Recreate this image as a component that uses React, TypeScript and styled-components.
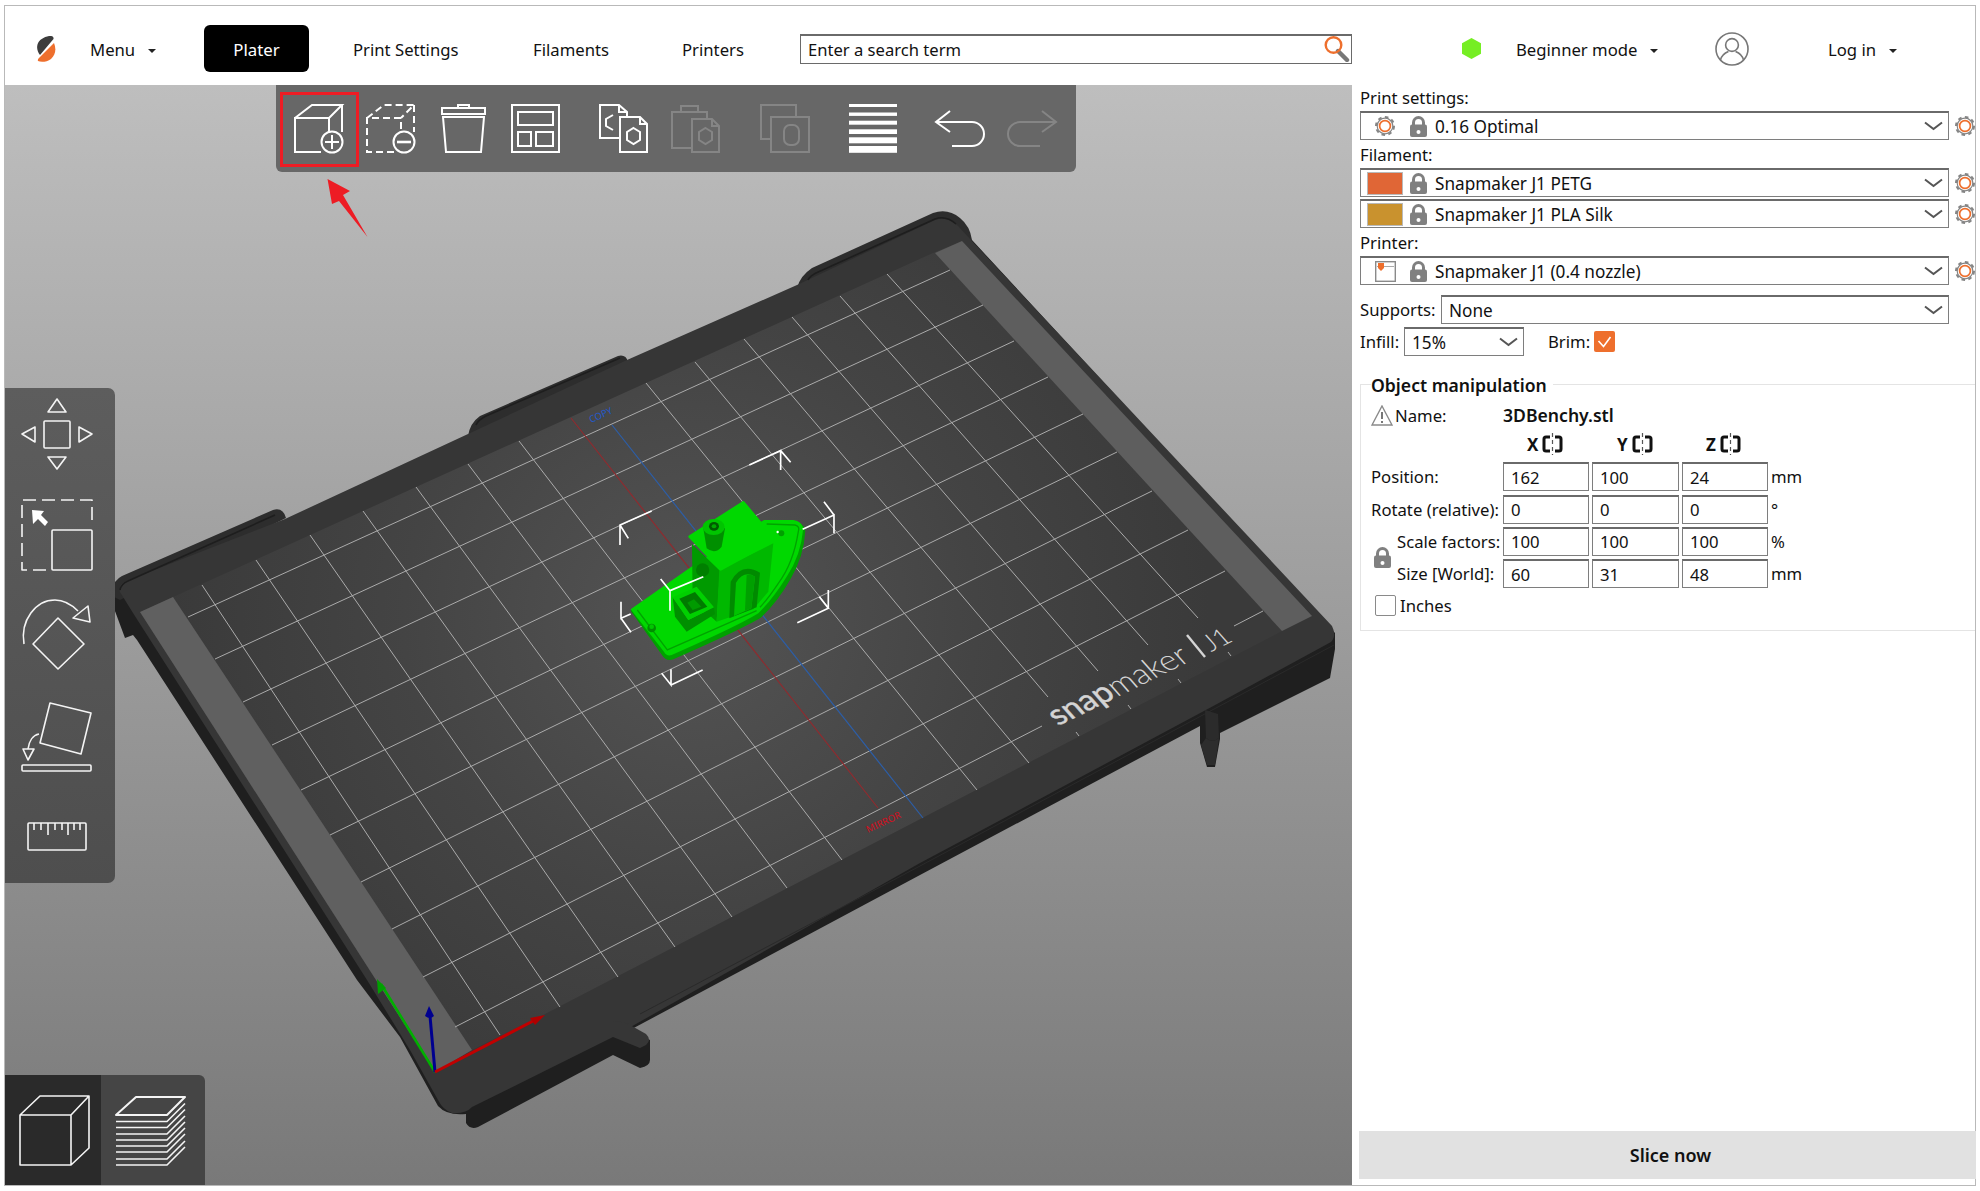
import React from "react";
import styled, { createGlobalStyle } from "styled-components";

const Global = createGlobalStyle`
  html, body { margin: 0; padding: 0; background: #fff; }
  body { font-family: "Noto Sans", "Open Sans", sans-serif; color: #111; overflow: hidden; }
  * { box-sizing: border-box; }
`;

const Page = styled.div`
  width: 1980px; height: 1191px; padding: 5px 4px 5px 4px; background: #fff;
`;
const Frame = styled.div`
  width: 100%; height: 100%; border: 1px solid #b9b9b9;
  display: grid; grid-template-rows: 79px 1fr; grid-template-columns: 1347px 1fr;
`;
const Header = styled.header`
  grid-column: 1 / span 2; display: flex; align-items: center; padding: 6px 0 0 32px; background: #fff;
`;
const Logo = styled.svg`width: 19px; height: 26px; margin-right: 34px; flex: none;`;
const NavItem = styled.div<{ $w: number; $ml?: number }>`
  width: ${p => p.$w}px; margin-left: ${p => p.$ml ?? 0}px; flex: none; padding-top: 2px;
  font-size: 16.7px; display: flex; align-items: center; white-space: nowrap; height: 47px;
`;
const Caret = styled.span<{ $ml: number }>`
  display: inline-block; margin-left: ${p => p.$ml}px; margin-top: 3px;
  border-left: 4px solid transparent; border-right: 4px solid transparent; border-top: 4px solid #222;
`;
const PlaterTab = styled.div`
  width: 105px; height: 47px; flex: none; background: #000; color: #fff; border-radius: 6px; padding-top: 2px;
  font-size: 16.8px; display: flex; align-items: center; justify-content: center;
`;
const SearchBox = styled.div`
  width: 552px; height: 30px; flex: none; display: flex; align-items: center; justify-content: space-between;
  border: 1px solid #6a6a6a; border-top-width: 2px; padding: 0 1px 0 7px; font-size: 16.6px;
`;
const HeaderGlyph = styled.svg<{ $ml: number; $w: number; $h: number }>`
  width: ${p => p.$w}px; height: ${p => p.$h}px; margin-left: ${p => p.$ml}px; flex: none;
`;

const Viewport = styled.main`
  position: relative; overflow: hidden; background: linear-gradient(#bebebe, #797979);
`;
const Scene = styled.svg`position: absolute; inset: 0; width: 100%; height: 100%;`;
const TopBar = styled.div`
  position: absolute; left: 271px; top: 0; width: 800px; height: 87px; background: #676767;
  border-radius: 0 0 6px 6px; display: flex; padding: 19px 0 0 18px;
`;
const ToolIcon = styled.svg<{ $ml?: number; $muted?: boolean }>`
  width: 50px; height: 50px; flex: none; margin-left: ${p => p.$ml ?? 0}px; overflow: visible;
  fill: none; stroke: ${p => (p.$muted ? "#858585" : "#fff")}; stroke-width: 2;
`;
const RedBox = styled.div`
  position: absolute; left: 275px; top: 7px; width: 79px; height: 75px; border: 3px solid #ed1c24;
`;
const RedArrow = styled.svg`
  position: absolute; left: 317px; top: 90px; width: 50px; height: 66px;
`;
const SideBar = styled.div`
  position: absolute; left: 0; top: 303px; width: 110px; height: 495px;
  background: linear-gradient(#5d5d5d, #4e4e4e); border-radius: 0 7px 7px 0;
  padding: 11px 0 0 17px; display: flex; flex-direction: column;
`;
const SideIcon = styled.svg<{ $mt?: number; $h?: number }>`
  width: 70px; height: ${p => p.$h ?? 70}px; margin-top: ${p => p.$mt ?? 0}px; flex: none; overflow: visible;
  fill: none; stroke: #f4f4f4; stroke-width: 1.6; stroke-linejoin: round;
`;
const ViewSwitch = styled.div`
  position: absolute; left: 0; bottom: 0; display: flex; height: 110px;
`;
const ViewCell = styled.div<{ $active?: boolean }>`
  width: ${p => (p.$active ? 96 : 104)}px; background: ${p => (p.$active ? "#2a2a2a" : "#454545")};
  border-radius: ${p => (p.$active ? "0" : "0 6px 0 0")}; padding: ${p => (p.$active ? "21px 0 0 15px" : "22px 0 0 15px")};
`;
const ViewIcon = styled.svg`
  width: 70px; height: 70px; display: block; overflow: visible; fill: none; stroke: #f4f4f4; stroke-width: 1.6; stroke-linejoin: round;
`;

const Panel = styled.aside`
  display: flex; flex-direction: column; padding: 2px 0 6px 8px; font-size: 16.7px; min-height: 0; background: #fff;
`;
const FieldLabel = styled.div<{ $mt?: number }>`
  height: 22px; line-height: 22px; margin: ${p => p.$mt ?? 0}px 0 2px 0; white-space: nowrap;
`;
const ComboRow = styled.div<{ $mb?: number }>`
  display: flex; align-items: center; margin-bottom: ${p => p.$mb ?? 0}px;
`;
const Combo = styled.div<{ $w: number }>`
  width: ${p => p.$w}px; height: 29px; display: flex; align-items: center; flex: none; font-size: 17.2px;
  border: 1px solid #7e7e7e; border-top: 2px solid #6a6a6a; background: #fff; white-space: nowrap;
`;
const LeadSlot = styled.div`width: 48px; display: flex; justify-content: center; align-items: center; flex: none;`;
const Swatch = styled.div<{ $c: string }>`
  width: 36px; height: 23px; background: ${p => p.$c}; border: 1px solid #b9b9b9;
`;
const LockIcon = styled.svg<{ $mr?: number }>`
  width: 19px; height: 21px; flex: none; margin-right: ${p => p.$mr ?? 0}px;
`;
const ComboText = styled.span<{ $pl?: number }>`flex: 1; padding-left: ${p => p.$pl ?? 0}px;`;
const Chevron = styled.svg`width: 19px; height: 10px; flex: none; margin-right: 5px;`;
const SideGear = styled.svg`width: 20px; height: 22px; flex: none; margin-left: 6px;`;
const InlineLabel = styled.span<{ $w: number }>`width: ${p => p.$w}px; flex: none; white-space: nowrap;`;
const OptionsRow = styled.div<{ $mt: number }>`
  display: flex; align-items: center; margin-top: ${p => p.$mt}px;
`;
const BrimLabel = styled.span`margin-left: 24px; width: 46px; white-space: nowrap;`;
const OrangeCheck = styled.div`
  width: 21px; height: 21px; border-radius: 2px; background: #ee6f2d; display: flex; align-items: center; justify-content: center;
`;
const Group = styled.section`
  margin-top: 28px; border: 1px solid #e4e4e4; border-right: none; padding: 0 0 14px 10px; display: flex; flex-direction: column;
`;
const GroupTitle = styled.div`
  align-self: flex-start; margin-top: -11px; height: 22px; line-height: 22px; background: #fff; padding-right: 6px;
  font-weight: 600; font-size: 17.6px; white-space: nowrap;
`;
const NameRow = styled.div`
  display: grid; grid-template-columns: 24px 108px auto; align-items: center; height: 22px; margin-top: 7px;
`;
const WarnIcon = styled.svg`width: 22px; height: 21px;`;
const FileName = styled.span`font-weight: 600; font-size: 17.6px;`;
const AxisTable = styled.div`
  display: grid; grid-template-columns: 26px 106px 89px 90px 89px auto; row-gap: 3.3px; margin-top: 8px; align-items: center;
`;
const AxisHead = styled.div<{ $pl: number }>`
  height: 22px; display: flex; align-items: center; gap: 4px; font-weight: 700; font-size: 17px; margin-bottom: 4px; padding-left: ${p => p.$pl}px;
`;
const HeadSpacer = styled.div`grid-column: 1 / span 2;`;
const AxisIcon = styled.svg`width: 21px; height: 22px;`;
const RowLabel = styled.div<{ $indent?: boolean }>`
  grid-column: ${p => (p.$indent ? "2" : "1 / span 2")}; white-space: nowrap;
`;
const LockCell = styled.div`
  grid-column: 1; grid-row: span 2; display: flex; align-items: center; padding-left: 2px;
`;
const NumInput = styled.div`
  height: 29px; margin-right: 3px; border: 1px solid #7e7e7e; border-top: 2px solid #6a6a6a; padding-left: 7px; display: flex; align-items: center; background: #fff;
`;
const Unit = styled.div`white-space: nowrap;`;
const InchesRow = styled.div`
  display: flex; align-items: center; margin: 7px 0 0 4px; height: 21px; gap: 4px;
`;
const EmptyBox = styled.div`width: 21px; height: 21px; border: 1.5px solid #8a8a8a; border-radius: 2px;`;
const SliceButton = styled.button`
  margin: auto -1px 0 -1px; height: 48px; border: none; background: #e1e1e1; font: 600 18px "Noto Sans", sans-serif; color: #111; padding: 0 0 0 6px;
`;

const Chev = () => (
  <Chevron viewBox="0 0 19 10"><path d="M1 1.5 L9.5 8 L18 1.5" fill="none" stroke="#555" strokeWidth="2" /></Chevron>
);
const GearShape = () => (
  <>
    <circle cx="10" cy="11" r="9" fill="none" stroke="#858585" strokeWidth="2" strokeDasharray="3.6 3.4" />
    <circle cx="10" cy="11" r="7.8" fill="#fff" stroke="#858585" strokeWidth="1.2" />
    <circle cx="10" cy="11" r="5.4" fill="#fff" stroke="#ee6f2d" strokeWidth="1.7" />
  </>
);
const Gear = () => <SideGear viewBox="0 0 20 22"><GearShape /></SideGear>;
const LockShape = () => (
  <>
    <path d="M4.5 9 V6.5 A5 5 0 0 1 14.5 6.5 V9" fill="none" stroke="#808080" strokeWidth="3" />
    <rect x="1" y="8.5" width="17" height="12.5" rx="2" fill="#808080" />
    <circle cx="9.5" cy="16" r="2" fill="#fff" />
  </>
);
const Lock = ({ mr }: { mr?: number }) => <LockIcon $mr={mr} viewBox="0 0 19 21"><LockShape /></LockIcon>;
const AxisGlyph = () => (
  <AxisIcon viewBox="0 0 21 22">
    <path d="M8 4 H4 Q2 4 2 6 V16 Q2 18 4 18 H8 M13 4 H17 Q19 4 19 6 V16 Q19 18 17 18 H13" fill="none" stroke="#111" strokeWidth="3" />
    <path d="M10.5 0 V22" stroke="#555" strokeWidth="1.2" strokeDasharray="4 3" />
  </AxisIcon>
);

const Profile = ({ lead, text }: { lead: React.ReactNode; text: string }) => (
  <ComboRow>
    <Combo $w={589}>
      <LeadSlot>{lead}</LeadSlot>
      <Lock mr={7} />
      <ComboText>{text}</ComboText>
      <Chev />
    </Combo>
    <Gear />
  </ComboRow>
);

const hexDoc = (cx: number, cy: number) => `M${cx} ${cy - 8} L${cx + 6.5} ${cy - 4} V${cy + 4} L${cx} ${cy + 8} L${cx - 6.5} ${cy + 4} V${cy - 4} Z`;

const gridA: number[][] = [
  [188, 617, 950, 270], [215, 659, 983, 305], [243, 702, 1014, 341], [272, 745, 1048, 377], [301, 790, 1083, 414],
  [330, 835, 1117, 452], [361, 882, 1152, 491], [392, 929, 1188, 530], [423, 977, 1225, 571], [455, 1027, 1042, 726], [1234, 626, 1263, 611],
];
const gridB: number[][] = [
  [202, 585, 500, 1035], [256, 560, 560, 1007], [310, 535, 618, 977], [363, 511, 675, 947], [416, 487, 732, 917],
  [468, 464, 787, 888], [519, 441, 842, 860], [646, 383, 977, 790], [695, 362, 1029, 763], [744, 339, 1048, 697],
  [792, 317, 1098, 671], [840, 296, 1148, 645], [887, 274, 1198, 618],
  [1076, 732, 1079, 736], [1128, 705, 1131, 709], [1178, 679, 1181, 683], [1228, 652, 1231, 656],
];
const brackets = [
  "M275 333 L180 375 V435 M180 375 L205 415",
  "M568 195 L662 152 V210 M662 152 L692 187",
  "M728 388 L822 345 V400 M822 345 L792 305",
  "M430 530 L330 572 V632 M330 572 L302 537",
  "M183 605 V655 L212 642 M183 655 L213 697",
  "M805 570 V625 L712 668 M805 625 L778 590",
  "M333 808 V855 L305 820 M333 855 L428 810",
];

const Bed = () => (
  <>
    <defs>
      <radialGradient id="plate" gradientUnits="userSpaceOnUse" cx="690" cy="620" r="520">
        <stop offset="0" stopColor="#545454" />
        <stop offset="0.55" stopColor="#444" />
        <stop offset="1" stopColor="#3a3a3a" />
      </radialGradient>
    </defs>
    <path fill="#1f1f1f" d="M112 590 V603 L125 638 L133 635 L137 640 L357 980 L400 1037 L438 1106 Q447 1116 466 1114 V1123 Q470 1130 478 1127 L613 1055 L640 1068 Q650 1066 650 1060 V1040 L630 1030 L920 875 L1200 726 V743 L1207 767 H1215 L1220 739 V733 L1330 678 L1335 649 V633 L972 240 L935 224 L627 364 L285 522 Z" />
    <path fill="#2d2d2d" d="M112 596 V590 Q114 580 122 576 L273 510 Q283 507 286 518 L200 560 L120 600 Z M468 436 Q470 423 480 416 L618 356 Q626 354 628 362 L540 405 Z M797 288 Q800 276 812 268 L933 213 Q948 208 960 218 Q970 226 972 240 L900 262 Z" />
    <path fill="#363636" d="M120 592 Q118 584 126 581 L285 519 L627 360 L797 285 L935 220 Q948 216 958 226 L1332 626 Q1337 636 1331 642 L1217 704 L967 838 L920 863 L613 1037 L472 1107 Q466 1114 452 1113 Q443 1110 438 1100 L410 1050 L367 980 L133 613 Z" />
    <path fill="none" stroke="#1e1e1e" strokeWidth="1.6" d="M120 590 Q121 584 128 581 L275 515 M476 425 Q478 420 486 416 L620 358 M808 280 Q810 276 816 273 L935 219 Q946 215 956 224" />
    <path fill="none" stroke="#2a2a2a" strokeWidth="1" d="M640 1014 L920 866 L1334 645" />
    <path fill="#363636" d="M613 1037 V1022 Q620 1020 630 1025 L646 1034 Q652 1040 646 1045 L640 1048 Z" />
    <path fill="#2b2b2b" d="M1205 710 L1218 714 L1219 738 Q1212 744 1206 738 Z" />
    <path fill="#2d2d2d" d="M1206 738 Q1212 744 1219 738 L1215 765 H1207 L1201 745 Z" />
    <path fill="url(#plate)" d="M140 612 L933 253 L960 242 L1312 616 L1282 631 L543 1015 L472 1050 L435 1072 Z" />
    <path fill="#606060" d="M140 612 L173 597 L472 1050 L435 1072 Z" />
    <path fill="#5e5e5e" d="M935 253 L962 241 L1312 616 L1282 631 Z" />
    {gridA.concat(gridB).map((l, i) => (
      <line key={i} x1={l[0]} y1={l[1]} x2={l[2]} y2={l[3]} stroke="#ababab" strokeWidth="1" />
    ))}
    <line x1="571" y1="418" x2="878" y2="808" stroke="#8f2b2f" strokeWidth="1.2" />
    <line x1="612" y1="425" x2="923" y2="818" stroke="#2c5ea8" strokeWidth="1.2" />
    <text transform="translate(591 423) rotate(-24)" fontFamily="Noto Sans, sans-serif" fontSize="9.5" fill="#2459c9">COPY</text>
    <text transform="translate(868 833) rotate(-25)" fontFamily="Noto Sans, sans-serif" fontSize="9.5" fill="#d01020">MIRROR</text>
    <text transform="matrix(0.9 -0.44 0.66 0.75 1058 726)" fontFamily="Lato, sans-serif" fontSize="32" fill="#d4d4d4">
      <tspan fontWeight="400" stroke="#d4d4d4" strokeWidth="0.5">snap</tspan><tspan fontWeight="300">maker</tspan>
    </text>
    <path d="M1187 635 L1205 657" stroke="#d4d4d4" strokeWidth="2.4" />
    <text transform="matrix(0.9 -0.44 0.66 0.75 1211 652)" fontFamily="Lato, sans-serif" fontWeight="300" fontSize="26" fill="#d4d4d4">J1</text>
    <path d="M435 1072 L381 984" stroke="#00b000" strokeWidth="2.6" />
    <path d="M377 979 L386 988 L378 994 Z" fill="#00a000" />
    <path d="M435 1072 L430 1016" stroke="#00008f" strokeWidth="3" />
    <path d="M429 1006 L434 1016 Q430 1020 425 1016 Z" fill="#00008f" />
    <path d="M435 1072 L535 1020" stroke="#c00000" strokeWidth="3" />
    <path d="M545 1015 L535 1025 L530 1018 Z" fill="#b00000" />
  </>
);

const Benchy = () => (
  <g transform="translate(560 400) scale(0.3333)">
    <path fill="#00a000" d="M212 632 L390 505 L610 362 L700 362 Q732 368 736 392 Q732 470 690 540 Q650 610 600 655 Q530 695 340 778 Q318 785 306 765 Z" />
    <path fill="#00d800" d="M212 628 L390 503 L612 360 L700 360 Q725 364 730 385 Q722 470 680 530 Q640 595 595 640 Q530 680 335 765 Q320 770 312 755 Z" />
    <path fill="none" stroke="#00a300" strokeWidth="4" d="M232 630 L322 750 L590 632 M620 372 L705 375 Q720 378 715 395 Q700 490 655 550 Q625 595 600 622" />
    <path fill="#009a00" d="M396 432 L480 512 L470 665 L398 600 Z" />
    <circle cx="428" cy="510" r="20" fill="#007f00" />
    <path fill="#00b800" d="M478 510 L640 430 L625 575 L580 628 L470 665 Z" />
    <path fill="#008a00" d="M508 655 L512 545 Q545 485 600 518 L590 622 Z" />
    <path fill="#00c400" d="M522 648 L528 548 Q552 510 585 530 L574 625 Z" />
    <path fill="#00a000" d="M555 632 L560 525 Q575 522 585 530 L574 625 Z" />
    <path fill="#00d800" stroke="#00d800" strokeWidth="8" strokeLinejoin="round" d="M389 410 L550 307 L644 420 L482 508 Z" />
    <path fill="#008f00" d="M430 385 L440 445 Q465 465 485 440 L495 385 Z" />
    <ellipse cx="461" cy="381" rx="33" ry="24" fill="#00c400" />
    <ellipse cx="462" cy="379" rx="15" ry="13" fill="#005a00" />
    <ellipse cx="462" cy="379" rx="7" ry="6" fill="#00a800" />
    <path fill="#008f00" d="M338 592 L385 660 L462 622 L465 642 L380 695 L345 650 Z" />
    <path fill="#00d000" d="M338 592 L410 560 L462 622 L385 660 Z" />
    <path fill="#007a00" d="M358 596 L405 576 L442 620 L390 642 Z" />
    <path fill="#009a00" d="M382 608 L402 598 L424 620 L398 630 Z" />
    <circle cx="275" cy="684" r="13" fill="#008f00" />
    <circle cx="275" cy="680" r="7" fill="#00c800" />
    <circle cx="664" cy="400" r="9" fill="#00a000" />
    <circle cx="653" cy="396" r="3.5" fill="#fff" />
    {brackets.map((d, i) => (
      <path key={i} d={d} fill="none" stroke="#fff" strokeWidth="5" />
    ))}
  </g>
);

export default function App() {
  return (
    <Page>
      <Global />
      <Frame>
        <Header>
          <Logo viewBox="0 0 19 26">
            <path fill="#3c3c3c" d="M12 0 C15 -0.5 17 1 16.5 3 L3 19 C0.5 16 -0.5 12 0.5 8.5 C1.5 4 7 1 12 0 Z" />
            <path fill="#ee6f2d" d="M17 7 C19.5 13 18.5 19 14 23 C10 26 4 26.5 1 25 C0.5 24 1 23 2 22 Z" />
          </Logo>
          <NavItem $w={114}>Menu<Caret $ml={13} /></NavItem>
          <PlaterTab>Plater</PlaterTab>
          <NavItem $w={180} $ml={44}>Print Settings</NavItem>
          <NavItem $w={149}>Filaments</NavItem>
          <NavItem $w={118}>Printers</NavItem>
          <SearchBox>
            Enter a search term
            <svg width="26" height="26" viewBox="0 0 26 26">
              <path d="M14 15 L23 24" stroke="#777" strokeWidth="4.4" strokeLinecap="round" />
              <circle cx="9.5" cy="9" r="7.8" fill="none" stroke="#ee6f2d" strokeWidth="2.4" />
            </svg>
          </SearchBox>
          <HeaderGlyph $ml={110} $w={19} $h={21} viewBox="0 0 19 21">
            <path d="M9.5 0 L19 5.2 V15.8 L9.5 21 L0 15.8 V5.2 Z" fill="#76ee24" />
          </HeaderGlyph>
          <NavItem $w={199} $ml={35}>Beginner mode<Caret $ml={13} /></NavItem>
          <HeaderGlyph $ml={0} $w={34} $h={34} viewBox="0 0 34 34">
            <g fill="none" stroke="#777" strokeWidth="1.6">
              <circle cx="17" cy="17" r="16" />
              <circle cx="17" cy="13" r="6.4" />
              <path d="M5.5 28 C7 22 11 20.5 13.5 19.5 M28.5 28 C27 22 23 20.5 20.5 19.5" />
            </g>
          </HeaderGlyph>
          <NavItem $w={120} $ml={79}>Log in<Caret $ml={13} /></NavItem>
        </Header>

        <Viewport>
          <Scene viewBox="5 85 1347 1100">
            <Bed />
            <Benchy />
          </Scene>

          <TopBar>
            <ToolIcon viewBox="0 0 50 50">
              <path d="M27 48 H1 V14 H35 V28 M1 14 L18 1 H48 L35 14 M48 1 V28" />
              <circle cx="38" cy="38" r="10.5" />
              <path d="M38 31 V45 M31 38 H45" />
            </ToolIcon>
            <ToolIcon $ml={22} viewBox="0 0 50 50">
              <path strokeDasharray="7 4" d="M28 48 H1 V14 H35 V28 M1 14 L18 1 H48 L35 14 M48 1 V28" />
              <circle cx="38" cy="38" r="10.5" />
              <path d="M31 38 H45" strokeWidth="2.6" />
            </ToolIcon>
            <ToolIcon $ml={23} viewBox="0 0 50 50">
              <path d="M19 4 V1 H30 V4 M3 4 H46 V10 H3 Z M4 13 H45 L42 48 H7 Z" />
            </ToolIcon>
            <ToolIcon $ml={22} viewBox="0 0 50 50">
              <rect x="1" y="1" width="47" height="47" />
              <rect x="7" y="8" width="35" height="13" />
              <rect x="7" y="28" width="13" height="14" />
              <rect x="25" y="28" width="17" height="14" />
            </ToolIcon>
            <ToolIcon $ml={38} viewBox="0 0 50 50">
              <path d="M20 34 H1 V1 H20 L28 8 V13 M20 1 V8 H28" />
              <path d="M14 11 L7 15 V22 L14 26" />
              <path d="M21 13 H41 L48 20 V48 H21 Z M41 13 V20 H48" />
              <path d={hexDoc(34.5, 32)} />
            </ToolIcon>
            <ToolIcon $ml={22} $muted viewBox="0 0 50 50">
              <path d="M21 44 H1 V8 H36 V15 M10 8 V2 H27 V8" />
              <path d="M21 15 H41 L48 22 V48 H21 Z M41 15 V22 H48" />
              <path d={hexDoc(34.5, 32)} />
            </ToolIcon>
            <ToolIcon $ml={39} $muted viewBox="0 0 50 50">
              <path d="M11 35 H1 V1 H36 V13" />
              <rect x="11" y="13" width="38" height="35" />
              <rect x="24" y="21" width="15" height="20" rx="6" />
            </ToolIcon>
            <ToolIcon $ml={39} viewBox="0 0 50 50">
              <g fill="#fff" stroke="none">
                <rect x="0" y="0" width="48" height="3" />
                <rect x="0" y="8.5" width="48" height="3.4" />
                <rect x="0" y="16.7" width="48" height="4" />
                <rect x="0" y="25.3" width="48" height="4.7" />
                <rect x="0" y="33.3" width="48" height="6" />
                <rect x="0" y="42" width="48" height="6.8" />
              </g>
            </ToolIcon>
            <ToolIcon $ml={36} viewBox="0 0 50 50" strokeWidth="2.4">
              <path d="M15 7 L1 18 L15 28 M1 18 H37 A12 12 0 0 1 37 42 H17" />
            </ToolIcon>
            <ToolIcon $ml={22} $muted viewBox="0 0 50 50">
              <path d="M35 7 L49 18 L35 28 M49 18 H13 A12 12 0 0 0 13 42 H33" />
            </ToolIcon>
          </TopBar>
          <RedBox />
          <RedArrow viewBox="0 0 50 66">
            <path fill="#ed1c24" d="M5.5 4 L28 16 L21 20 L45.5 62 L17 26 L10 29 Z" />
          </RedArrow>

          <SideBar>
            <SideIcon viewBox="0 0 70 70">
              <path d="M35 0 L44 13 H26 Z M0 35 L13 28 V43 Z M70 35 L57 28 V43 Z M35 70 L26 58 H44 Z" />
              <rect x="22" y="22" width="26" height="27" rx="1" />
            </SideIcon>
            <SideIcon $mt={31} viewBox="0 0 70 70">
              <path strokeDasharray="13 6" d="M24 70 H0 V0 H70 V26" />
              <rect x="30" y="30" width="40" height="40" rx="1" />
              <path fill="#fff" stroke="none" d="M10 10 L22 11 L19 15 L26 22 L23 26 L16 19 L11 24 Z" />
            </SideIcon>
            <SideIcon $mt={30} viewBox="0 0 70 70">
              <path d="M36 18 L62 44 L36 69 L11 44 Z" />
              <path d="M2 44 C-2 20 14 0 33 0 C42 0 50 5 56 11" />
              <path d="M66 6 L68 22 L51 18 Z" />
            </SideIcon>
            <SideIcon $mt={32} viewBox="0 0 70 70">
              <path d="M28 1 L69 11 L59 52 L18 41 Z" />
              <rect x="0" y="63" width="69" height="6" rx="1" />
              <path d="M17 32 C11 33 7 39 6 47" />
              <path d="M1 47 H12 L6 58 Z" />
            </SideIcon>
            <SideIcon $mt={51} $h={28} viewBox="0 0 70 28">
              <rect x="6" y="0" width="58" height="27" rx="1" />
              <path d="M12 0 V7 M19 0 V7 M26 0 V12 M33 0 V7 M40 0 V7 M46 0 V12 M52 0 V7 M58 0 V7" />
            </SideIcon>
          </SideBar>

          <ViewSwitch>
            <ViewCell $active>
              <ViewIcon viewBox="0 0 70 70">
                <path d="M0 19 H51 V69 H0 Z M0 19 L20 0 H69 L51 19 M69 0 V52 L51 69" />
              </ViewIcon>
            </ViewCell>
            <ViewCell>
              <ViewIcon viewBox="0 0 70 70">
                <path strokeWidth="2" d="M0 18 L20 0 H69 L51 18 Z" />
                {[24.5, 30.5, 37, 43, 49, 55, 62, 68].map(y => (
                  <path key={y} d={`M0 ${y} H51 L69 ${y - 18}`} />
                ))}
              </ViewIcon>
            </ViewCell>
          </ViewSwitch>
        </Viewport>

        <Panel>
          <FieldLabel>Print settings:</FieldLabel>
          <Profile text="0.16 Optimal" lead={<svg width="20" height="22" viewBox="0 0 20 22"><GearShape /></svg>} />
          <FieldLabel $mt={4}>Filament:</FieldLabel>
          <ComboRow $mb={2}>
            <Combo $w={589}>
              <LeadSlot><Swatch $c="#e06636" /></LeadSlot>
              <Lock mr={7} />
              <ComboText>Snapmaker J1 PETG</ComboText>
              <Chev />
            </Combo>
            <Gear />
          </ComboRow>
          <Profile text="Snapmaker J1 PLA Silk" lead={<Swatch $c="#c9922e" />} />
          <FieldLabel $mt={4}>Printer:</FieldLabel>
          <Profile
            text="Snapmaker J1 (0.4 nozzle)"
            lead={
              <svg width="21" height="21" viewBox="0 0 21 21">
                <rect x="0.7" y="0.7" width="19.6" height="19.6" fill="#fff" stroke="#8a8a8a" strokeWidth="1.4" />
                <rect x="2" y="5" width="17" height="1" fill="#aaa" />
                <path d="M3 2 H9 V7 L6 10 L3 7 Z" fill="#ee6f2d" />
              </svg>
            }
          />
          <OptionsRow $mt={10}>
            <InlineLabel $w={81}>Supports:</InlineLabel>
            <Combo $w={508}><ComboText $pl={7}>None</ComboText><Chev /></Combo>
          </OptionsRow>
          <OptionsRow $mt={3}>
            <InlineLabel $w={44}>Infill:</InlineLabel>
            <Combo $w={120}><ComboText $pl={7}>15%</ComboText><Chev /></Combo>
            <BrimLabel>Brim:</BrimLabel>
            <OrangeCheck>
              <svg width="15" height="12" viewBox="0 0 15 12"><path d="M1.5 5 L6.5 10.5 L13.5 1" fill="none" stroke="#fff" strokeWidth="1.6" /></svg>
            </OrangeCheck>
          </OptionsRow>

          <Group>
            <GroupTitle>Object manipulation</GroupTitle>
            <NameRow>
              <WarnIcon viewBox="0 0 22 21">
                <path d="M11 1 L21 20 H1 Z" fill="none" stroke="#8a8a8a" strokeWidth="1.4" />
                <path d="M11 7 V14 M11 16 V18" stroke="#777" strokeWidth="2" />
              </WarnIcon>
              <span>Name:</span>
              <FileName>3DBenchy.stl</FileName>
            </NameRow>
            <AxisTable>
              <HeadSpacer />
              <AxisHead $pl={24}>X<AxisGlyph /></AxisHead>
              <AxisHead $pl={25}>Y<AxisGlyph /></AxisHead>
              <AxisHead $pl={24}>Z<AxisGlyph /></AxisHead>
              <div />
              <RowLabel>Position:</RowLabel>
              <NumInput>162</NumInput><NumInput>100</NumInput><NumInput>24</NumInput><Unit>mm</Unit>
              <RowLabel>Rotate (relative):</RowLabel>
              <NumInput>0</NumInput><NumInput>0</NumInput><NumInput>0</NumInput><Unit>°</Unit>
              <LockCell><Lock /></LockCell>
              <RowLabel $indent>Scale factors:</RowLabel>
              <NumInput>100</NumInput><NumInput>100</NumInput><NumInput>100</NumInput><Unit>%</Unit>
              <RowLabel $indent>Size [World]:</RowLabel>
              <NumInput>60</NumInput><NumInput>31</NumInput><NumInput>48</NumInput><Unit>mm</Unit>
            </AxisTable>
            <InchesRow><EmptyBox />Inches</InchesRow>
          </Group>

          <SliceButton>Slice now</SliceButton>
        </Panel>
      </Frame>
    </Page>
  );
}
